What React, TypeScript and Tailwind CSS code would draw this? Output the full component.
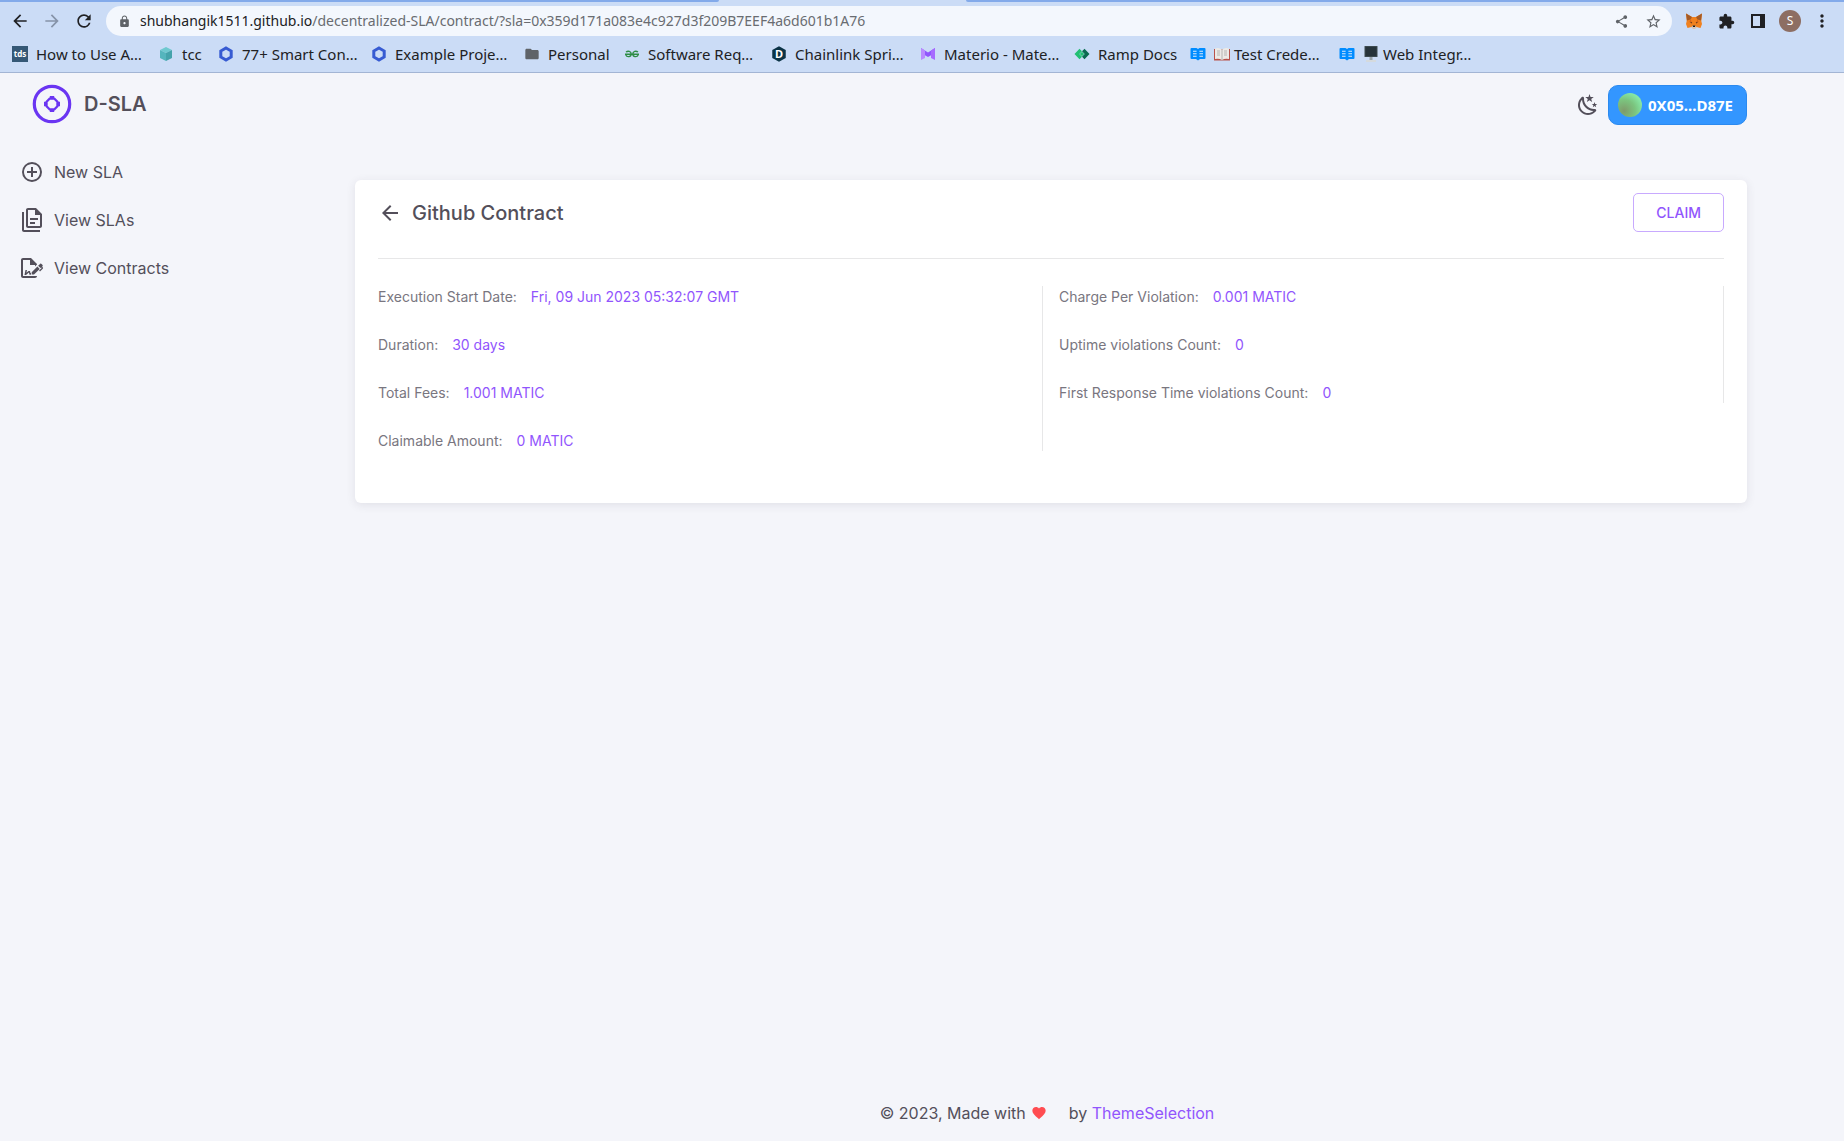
import type { ReactNode } from "react";
import {
    MdArrowBack,
    MdArrowForward,
    MdExtension,
    MdFolder,
    MdHexagon,
    MdLock,
    MdMoreVert,
    MdRefresh,
    MdShare,
    MdStarBorder,
} from "react-icons/md";

const MdiIcon = ({ d, className }: { d: string; className?: string }) => (
    <svg viewBox="0 0 24 24" fill="currentColor" className={className} aria-hidden="true">
        <path d={d} />
    </svg>
);

const icons = {
    plusCircle:
        "M12,20C7.59,20 4,16.41 4,12C4,7.59 7.59,4 12,4C16.41,4 20,7.59 20,12C20,16.41 16.41,20 12,20M12,2A10,10 0 0,0 2,12A10,10 0 0,0 12,22A10,10 0 0,0 22,12A10,10 0 0,0 12,2M13,7H11V11H7V13H11V17H13V13H17V11H13V7Z",
    documents:
        "M16 0H8C6.9 0 6 .9 6 2V18C6 19.1 6.9 20 8 20H20C21.1 20 22 19.1 22 18V6L16 0M20 18H8V2H15V7H20V18M4 4V22H20V24H4C2.9 24 2 23.1 2 22V4H4M10 10V12H18V10H10M10 14V16H15V14H10Z",
    fileSign:
        "M19.7 12.9L14 18.6H11.7V16.3L17.4 10.6L19.7 12.9M23.1 12.1C23.1 12.4 22.8 12.7 22.5 13L20 15.5L19.1 14.6L21.7 12L21.1 11.4L20.4 12.1L18.1 9.8L20.3 7.7C20.5 7.5 20.9 7.5 21.2 7.7L22.6 9.1C22.8 9.3 22.8 9.7 22.6 10C22.4 10.2 22.2 10.4 22.2 10.6C22.2 10.8 22.4 11 22.6 11.2C22.9 11.5 23.2 11.8 23.1 12.1M3 20V4H10V9H15V10.5L17 8.5V8L11 2H3C1.9 2 1 2.9 1 4V20C1 21.1 1.9 22 3 22H15C16.1 22 17 21.1 17 20H3M11 17.1C10.8 17.1 10.6 17.2 10.5 17.2L10 15H8.5L6.4 16.7L7 14H5.5L4.5 19H6L8.9 16.4L9.5 18.7H10.5L11 18.6V17.1Z",
    weatherNight:
        "M17.75,4.09L15.22,6.03L16.13,9.09L13.5,7.28L10.87,9.09L11.78,6.03L9.25,4.09L12.44,4L13.5,1L14.56,4L17.75,4.09M21.25,11L19.61,12.25L20.2,14.23L18.5,13.06L16.8,14.23L17.39,12.25L15.75,11L17.81,10.95L18.5,9L19.19,10.95L21.25,11M18.97,15.95C19.8,15.87 20.69,17.05 20.16,17.8C19.84,18.25 19.5,18.67 19.08,19.07C15.17,23 8.84,23 4.94,19.07C1.03,15.17 1.03,8.83 4.94,4.93C5.34,4.53 5.76,4.17 6.21,3.85C6.96,3.32 8.14,4.21 8.06,5.04C7.79,7.9 8.75,10.87 10.95,13.06C13.14,15.26 16.1,16.22 18.97,15.95M17.33,17.97C14.5,17.81 11.7,16.64 9.53,14.5C7.36,12.31 6.2,9.5 6.04,6.68C3.23,9.82 3.34,14.64 6.35,17.66C9.37,20.67 14.19,20.78 17.33,17.97Z",
    heart:
        "M12,21.35L10.55,20.03C5.4,15.36 2,12.27 2,8.5C2,5.41 4.42,3 7.5,3C9.24,3 10.91,3.81 12,5.08C13.09,3.81 14.76,3 16.5,3C19.58,3 22,5.41 22,8.5C22,12.27 18.6,15.36 13.45,20.03L12,21.35Z",
};

const ChainlinkIcon = () => (
    <svg viewBox="0 0 16 16" className="size-4 shrink-0" aria-hidden="true">
        <path d="M8 2 L13.2 5 V11 L8 14 L2.8 11 V5 Z" fill="none" stroke="#375bd2" strokeWidth="3" />
    </svg>
);

const CubeIcon = () => (
    <svg viewBox="0 0 16 16" className="size-4 shrink-0" aria-hidden="true">
        <path d="M8 1 L14 4 L8 7 L2 4 Z" fill="#6fc9cf" />
        <path d="M2 4 L8 7 V15 L2 12 Z" fill="#55b5bd" />
        <path d="M14 4 L8 7 V15 L14 12 Z" fill="#45a3ab" />
    </svg>
);

const GeeksIcon = () => (
    <svg viewBox="0 0 16 16" className="size-4 shrink-0" fill="none" stroke="#2f8d46" strokeWidth="1.4" aria-hidden="true">
        <path d="M2 6 C4 4.6 7.2 5 7.2 8 C7.2 11 3 11.6 1.8 9 M1 8.2 H15 M14 6 C12 4.6 8.8 5 8.8 8 C8.8 11 13 11.6 14.2 9" />
    </svg>
);

const MaterioIcon = () => (
    <svg viewBox="0 0 16 16" className="size-4 shrink-0" aria-hidden="true">
        <path d="M1 2 L8 6.5 L15 2 V7 L8 11 L1 7 Z" fill="#9155fd" />
        <path d="M1 2 L5 4.6 V12 L1 14 Z" fill="#b98aff" />
        <path d="M15 2 L11 4.6 V12 L15 14 Z" fill="#a66bff" />
    </svg>
);

const RampIcon = () => (
    <svg viewBox="0 0 16 16" className="size-4 shrink-0" aria-hidden="true">
        <path d="M5.5 2.8 L8 5.3 L5.3 8 L8 10.7 L5.5 13.2 L0.5 8 Z" fill="#22bf73" />
        <path d="M10.5 2.8 L15.5 8 L10.5 13.2 L8 10.7 L10.7 8 L8 5.3 Z" fill="#0b6b51" />
        <path d="M8 5.8 L10.2 8 L8 10.2 L5.8 8 Z" fill="#22bf73" />
    </svg>
);

const BookIcon = () => (
    <svg viewBox="0 0 16 16" className="size-4 shrink-0" aria-hidden="true">
        <path d="M1.5 2 H6.5 L8 3 L9.5 2 H14.5 Q15.5 2 15.5 3 V12 Q15.5 13 14.5 13 H10 L8 14.5 L6 13 H1.5 Q0.5 13 0.5 12 V3 Q0.5 2 1.5 2 Z" fill="#008cff" />
        <path d="M3 5.2 H6.6 M3 7.7 H6.6 M3 10.2 H6.6 M9.4 5.2 H13 M9.4 7.7 H13 M9.4 10.2 H13" stroke="#d9e9fb" strokeWidth="1.1" />
    </svg>
);

const OpenBookIcon = () => (
    <svg viewBox="0 0 16 16" className="size-4 shrink-0" aria-hidden="true">
        <path d="M0 3 H16 V14.5 H0 Z" fill="#b9524a" />
        <path d="M1 2.5 Q5 1 8 3.5 Q11 1 15 2.5 V13 Q11 12 8 14 Q5 12 1 13 Z" fill="#eceae6" />
        <path d="M8 3.5 V14 M3 5 H6 M3 7 H6 M3 9 H6 M10 5 H13 M10 7 H13 M10 9 H13" stroke="#aaa7a3" strokeWidth="0.8" />
    </svg>
);

const MonitorIcon = () => (
    <svg viewBox="0 0 16 16" className="size-4 shrink-0" aria-hidden="true">
        <rect x="1.5" width="13" height="11" rx="0.5" fill="#3c4a4f" />
        <rect x="2.5" y="1" width="11" height="9" fill="#26333a" />
        <path d="M6.5 11 H9.5 V14 H6.5 Z" fill="#9aa5ab" />
        <path d="M3 14 H13 V16 H3 Z" fill="#d5dadd" />
    </svg>
);

const FoxIcon = () => (
    <svg viewBox="0 0 18 18" className="size-[18px]" aria-hidden="true">
        <path d="M1 1.5 L7 5 H11 L17 1.5 L16.3 9 L17 12 L15.5 16 L11.5 15 L10 16.5 H8 L6.5 15 L2.5 16 L1 12 L1.7 9 Z" fill="#f0811f" />
        <path d="M1 1.5 L7 5 L5.6 7.5 L2 8.5 Z M17 1.5 L11 5 L12.4 7.5 L16 8.5 Z" fill="#a45a26" />
        <path d="M5.6 7.5 L7 11 L4.3 10 Z M12.4 7.5 L11 11 L13.7 10 Z" fill="#d9641a" />
        <path d="M5 10 L7.2 10.5 L6.8 11.6 Z M13 10 L10.8 10.5 L11.2 11.6 Z" fill="#3b2a22" />
        <path d="M6.5 15 L7.4 13.8 H10.6 L11.5 15 L10 16.8 H8 Z" fill="#d8c8bc" />
        <path d="M7.6 13.6 H10.4 L10 15 H8 Z" fill="#1f1a17" />
    </svg>
);

interface Bookmark {
    label: string;
    width: string;
    icon: ReactNode;
    emoji?: ReactNode;
}

const bookmarks: Bookmark[] = [
    {
        label: "How to Use A…",
        width: "w-[146px]",
        icon: (
            <span className="flex size-4 shrink-0 items-center justify-center bg-[#355876] text-[8px] leading-4 font-bold text-white">
                tds
            </span>
        ),
    },
    { label: "tcc", width: "w-[60px]", icon: <CubeIcon /> },
    { label: "77+ Smart Con…", width: "w-[153px]", icon: <ChainlinkIcon /> },
    { label: "Example Proje…", width: "w-[153px]", icon: <ChainlinkIcon /> },
    { label: "Personal", width: "w-[100px]", icon: <MdFolder className="size-4 shrink-0 text-[#5f6368]" /> },
    { label: "Software Req…", width: "w-[147px]", icon: <GeeksIcon /> },
    {
        label: "Chainlink Spri…",
        width: "w-[149px]",
        icon: (
            <span className="relative flex size-4 shrink-0 items-center justify-center">
                <MdHexagon className="absolute size-[18px] rotate-90 text-[#0b3346]" />
                <span className="relative text-[11px] leading-4 font-bold text-white">D</span>
            </span>
        ),
    },
    { label: "Materio - Mate…", width: "w-[154px]", icon: <MaterioIcon /> },
    { label: "Ramp Docs", width: "w-[116px]", icon: <RampIcon /> },
    { label: "Test Crede…", width: "w-[149px]", icon: <BookIcon />, emoji: <OpenBookIcon /> },
    { label: "Web Integr…", width: "w-[150px]", icon: <BookIcon />, emoji: <MonitorIcon /> },
];

const BrowserBar = () => (
    <div className="border-b border-[#a3b5d4] bg-[#cbdcf6] font-['Noto_Sans','Open_Sans',sans-serif] text-[#202124]">
        <div className="flex h-[2px]">
            <div className="w-[39%] rounded-br-sm bg-[#83aaea]" />
            <div className="w-[247px]" />
            <div className="flex-1 rounded-bl-sm bg-[#83aaea]" />
        </div>
        <div className="flex h-[38px] items-center pr-[6px] pl-[10px]">
            <div className="flex items-center gap-3">
                <button aria-label="Back"><MdArrowBack size={20} /></button>
                <button aria-label="Forward" className="text-[#8693a8]"><MdArrowForward size={20} /></button>
                <button aria-label="Reload"><MdRefresh size={20} /></button>
            </div>
            <div className="ml-3 flex h-[30px] flex-1 items-center rounded-full bg-[#f3f7fd] pr-[10px] pl-3">
                <MdLock size={13} className="text-[#5f6368]" />
                <div className="ml-[9px] flex-1 text-sm whitespace-nowrap">
                    shubhangik1511.github.io
                    <span className="text-[#696c71]">
                        /decentralized-SLA/contract/?sla=0x359d171a083e4c927d3f209B7EEF4a6d601b1A76
                    </span>
                </div>
                <div className="flex items-center gap-4 text-[#5f6368]">
                    <button aria-label="Share"><MdShare size={15} /></button>
                    <button aria-label="Bookmark this page"><MdStarBorder size={17} /></button>
                </div>
            </div>
            <div className="ml-[6px] grid grid-cols-5">
                <button aria-label="MetaMask" className="flex w-8 items-center justify-center"><FoxIcon /></button>
                <button aria-label="Extensions" className="flex w-8 items-center justify-center"><MdExtension size={17} /></button>
                <button aria-label="Side panel" className="flex w-8 items-center justify-center">
                    <span className="h-[14px] w-[14px] border-2 border-r-[5px] border-[#202124]" />
                </button>
                <button aria-label="Profile" className="flex w-8 items-center justify-center">
                    <span className="flex size-[22px] items-center justify-center rounded-full bg-[#8d6e63] text-xs text-white">S</span>
                </button>
                <button aria-label="Menu" className="flex w-8 items-center justify-center"><MdMoreVert size={20} /></button>
            </div>
        </div>
        <nav className="flex h-8 items-center pb-1 pl-3" aria-label="Bookmarks">
            {bookmarks.map((b) => (
                <a key={b.label} href="#" className={`flex shrink-0 items-center gap-2 text-[15px] leading-5 whitespace-nowrap ${b.width}`}>
                    {b.icon}
                    <span className="flex items-center gap-1">
                        {b.emoji}
                        {b.label}
                    </span>
                </a>
            ))}
        </nav>
    </div>
);

const navItems = [
    { label: "New SLA", icon: icons.plusCircle },
    { label: "View SLAs", icon: icons.documents },
    { label: "View Contracts", icon: icons.fileSign },
];

const Sidebar = () => (
    <aside className="w-[258px] shrink-0">
        <a href="#" className="flex h-[62px] items-center gap-3 pl-8">
            <svg viewBox="0 0 40 40" className="size-10" fill="none" stroke="#6a35f2" aria-hidden="true">
                <circle cx="20" cy="20" r="17.7" strokeWidth="3.2" />
                <path d="M17.6 14.6 H22.4 L25.4 17.6 V22.4 L22.4 25.4 H17.6 L14.6 22.4 V17.6 Z" strokeWidth="2.2" />
                <path d="M20 12 V14.6 M20 25.4 V28 M12 20 H14.6 M25.4 20 H28" strokeWidth="4.4" />
            </svg>
            <span className="text-xl font-semibold">D-SLA</span>
        </a>
        <nav className="mt-[13px] flex flex-col">
            {navItems.map((item) => (
                <a key={item.label} href="#" className="flex h-12 items-center gap-[10px] pl-5">
                    <MdiIcon d={item.icon} className="size-6" />
                    {item.label}
                </a>
            ))}
        </nav>
    </aside>
);

const leftDetails = [
    ["Execution Start Date:", "Fri, 09 Jun 2023 05:32:07 GMT"],
    ["Duration:", "30 days"],
    ["Total Fees:", "1.001 MATIC"],
    ["Claimable Amount:", "0 MATIC"],
];

const rightDetails = [
    ["Charge Per Violation:", "0.001 MATIC"],
    ["Uptime violations Count:", "0"],
    ["First Response Time violations Count:", "0"],
];

const DetailList = ({ items }: { items: string[][] }) => (
    <dl className="flex flex-col gap-[27px] border-r border-[#e7e7e8] text-sm leading-[21px]">
        {items.map(([label, value]) => (
            <div key={label} className="flex gap-[14px]">
                <dt className="text-[#797680]">{label}</dt>
                <dd className="text-[#9155fd]">{value}</dd>
            </div>
        ))}
    </dl>
);

const ContractCard = () => (
    <section className="rounded-md bg-white px-[23px] pt-[13px] pb-[52px] shadow-[0_2px_10px_0_rgba(58,53,65,0.1)]">
        <div className="flex items-center justify-between border-b border-[#e7e7e8] pb-[26px]">
            <div className="flex items-center gap-[10px]">
                <button aria-label="Go back"><MdArrowBack size={24} /></button>
                <h1 className="text-xl font-medium">Github Contract</h1>
            </div>
            <button className="h-[39px] rounded-[5px] border border-[#c8aafe] px-[22px] text-sm font-medium text-[#9155fd]">
                CLAIM
            </button>
        </div>
        <div className="mt-[27px] grid grid-cols-2 items-start gap-4">
            <DetailList items={leftDetails} />
            <DetailList items={rightDetails} />
        </div>
    </section>
);

const App = () => {
    return (
        <div className="flex min-h-screen flex-col bg-[#f4f5fa] font-['Inter',sans-serif] text-base text-[#534f5a]">
            <BrowserBar />
            <div className="flex flex-1">
                <Sidebar />
                <div className="mx-auto flex max-w-[1440px] flex-1 flex-col px-6">
                    <header className="flex h-16 items-center justify-end gap-2">
                        <button aria-label="Toggle theme">
                            <MdiIcon d={icons.weatherNight} className="size-6" />
                        </button>
                        <button className="flex h-10 items-center gap-[6px] rounded-[10px] border border-[#2b8af0] bg-[#3396ff] pr-[13px] pl-[9px] font-['Noto_Sans','Open_Sans',sans-serif] text-[15px] font-bold text-white">
                            <span className="size-6 rounded-full bg-[radial-gradient(circle_at_25%_75%,#7f9a6a,#7bc57f_45%,#86e6a4_75%)]" />
                            0X05...D87E
                        </button>
                    </header>
                    <main className="flex-1 pt-[43px]">
                        <ContractCard />
                    </main>
                    <footer className="flex h-14 items-center justify-center pr-2">
                        <span>© 2023, Made with</span>
                        <MdiIcon d={icons.heart} className="mr-[22px] ml-[5px] size-4 text-[#ff4c51]" />
                        <span>
                            by <a href="#" className="text-[#9155fd]">ThemeSelection</a>
                        </span>
                    </footer>
                </div>
            </div>
        </div>
    );
};

export default App;
